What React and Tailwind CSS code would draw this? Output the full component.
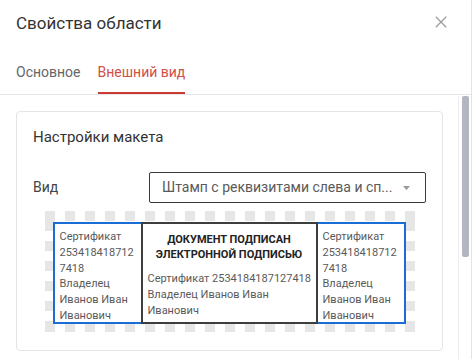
export default function App() {
  return (
    <div className="w-[473px] h-[359px] overflow-hidden bg-white font-['Roboto',sans-serif]">
      <div className="w-[472px] h-full border-r border-[#e3e3e7] flex flex-col">
        {/* Header */}
        <div className="h-[44px] shrink-0 flex items-center justify-between pl-4 pr-[24px]">
          <h2 className="text-[17px] leading-[24px] text-[#333] mt-px">Свойства области</h2>
          <svg width="12" height="12" viewBox="0 0 12 12" className="text-[#9c9c9c]">
            <path d="M0.8 0.8L11.2 11.2M11.2 0.8L0.8 11.2" stroke="currentColor" strokeWidth="1.3" fill="none" />
          </svg>
        </div>

        {/* Tabs */}
        <div className="h-[51px] shrink-0 flex items-end gap-[17px] px-4 border-b border-[#e6e6ea]">
          <div className="text-[14px] leading-[20px] pb-[10px] border-b-2 border-transparent text-[#666]">
            Основное
          </div>
          <div className="text-[14px] leading-[20px] pb-[10px] border-b-2 border-[#cc3a33] text-[#cf4f49]">
            Внешний вид
          </div>
        </div>

        {/* Body */}
        <div className="flex-1 flex min-h-0">
          <div className="flex-1 pt-4 pl-4 pr-[15px]">
            <div className="border border-[#e4e4e8] rounded-[4px] pt-[15px] px-4 pb-[18px]">
              <div className="text-[15px] leading-[20px] text-[#333]">Настройки макета</div>

              <div className="flex items-center mt-[25px]">
                <div className="w-[116px] text-[14px] text-[#444]">Вид</div>
                <div className="flex-1 h-[31px] border border-[#3a3a3a] rounded-[2px] pl-3 pr-[15px] flex items-center justify-between">
                  <span className="text-[14px] text-[#5a5a5a] whitespace-nowrap">Штамп с реквизитами слева и сп...</span>
                  <svg width="7" height="4" viewBox="0 0 7 4" className="text-[#9a9a9a]">
                    <path d="M0 0H7L3.5 4Z" fill="currentColor" />
                  </svg>
                </div>
              </div>

              {/* Stamp preview with dashed frame */}
              <div className="mt-2 mx-auto w-[370px] pt-[11px] pl-2 pr-[9px] pb-2 [background:repeating-linear-gradient(90deg,#e6e6e6_0_10px,transparent_10px_20px)_top_left/100%_10px_no-repeat,repeating-linear-gradient(90deg,#e6e6e6_0_10px,transparent_10px_20px)_bottom_left/100%_10px_no-repeat,repeating-linear-gradient(180deg,transparent_0_10px,#e6e6e6_10px_20px)_top_left/10px_100%_no-repeat,repeating-linear-gradient(180deg,transparent_0_10px,#e6e6e6_10px_20px)_top_right/10px_100%_no-repeat]">
                <div className="flex h-[102px] bg-white text-[11px] leading-[15.8px] text-[#5a5a5a] whitespace-nowrap">
                  <div className="w-[88px] border-2 border-r-0 border-[#1b6dd4] pl-[5px] pt-[5px]">
                    Сертификат<br />253418418712<br />7418<br />Владелец<br />Иванов Иван<br />Иванович
                  </div>
                  <div className="w-[177px] border-2 border-[#3d3d3d] pl-[5px] pt-[8px]">
                    <div className="text-center font-bold text-[#222] leading-[15px] pr-[5px]">
                      ДОКУМЕНТ ПОДПИСАН<br />ЭЛЕКТРОННОЙ ПОДПИСЬЮ
                    </div>
                    <div className="mt-[9px]">
                      Сертификат 2534184187127418<br />Владелец Иванов Иван<br />Иванович
                    </div>
                  </div>
                  <div className="w-[88px] border-2 border-l-0 border-[#1b6dd4] pl-[5px] pt-[5px]">
                    Сертификат<br />253418418712<br />7418<br />Владелец<br />Иванов Иван<br />Иванович
                  </div>
                </div>
              </div>
            </div>
          </div>

          {/* Scrollbar */}
          <div className="w-[13px] border-l border-[#ededf0] pt-px pl-[3px]">
            <div className="w-[7px] h-[161px] rounded-[2px] bg-[#b3b6be]" />
          </div>
        </div>
      </div>
    </div>
  );
}
